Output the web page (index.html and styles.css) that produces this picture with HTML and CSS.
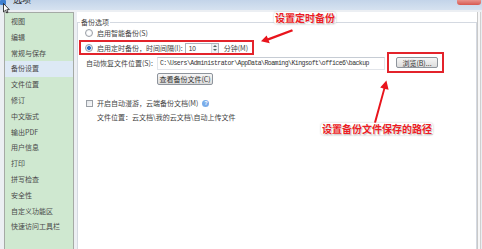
FILE: index.html
```html
<!DOCTYPE html>
<html lang="zh">
<head>
<meta charset="utf-8">
<title>选项</title>
<link rel="stylesheet" href="styles.css">
</head>
<body>
<div class="window">
  <div class="titlebar">
    <span class="app-icon"></span>
    <span class="title">选项</span>
    <span class="spacer"></span>
    <span class="close"></span>
  </div>
  <div class="main">
    <nav class="sidebar">
      <div class="item">视图</div>
      <div class="item">编辑</div>
      <div class="item">常规与保存</div>
      <div class="item active">备份设置</div>
      <div class="item">文件位置</div>
      <div class="item">修订</div>
      <div class="item">中文版式</div>
      <div class="item">输出PDF</div>
      <div class="item">用户信息</div>
      <div class="item">打印</div>
      <div class="item">拼写检查</div>
      <div class="item">安全性</div>
      <div class="item">自定义功能区</div>
      <div class="item">快速访问工具栏</div>
    </nav>
    <section class="content">
      <fieldset class="group">
        <legend class="legend">备份选项</legend>
        <div class="row radio-row first">
          <span class="radio"></span>
          <span class="label">启用智能备份(S)</span>
        </div>
        <div class="row radio-row second">
          <span class="radio checked"></span>
          <span class="label">启用定时备份，时间间隔(I):</span>
          <span class="spin">
            <span class="spin-value">10</span>
            <span class="spin-btns"><span class="up"></span><span class="down"></span></span>
          </span>
          <span class="label unit">分钟(M)</span>
        </div>
        <div class="row path-row">
          <span class="label path-label">自动恢复文件位置(S):</span>
          <span class="path-input">C:\Users\Administrator\AppData\Roaming\Kingsoft\office6\backup</span>
          <span class="btn browse">浏览(B)...</span>
        </div>
        <div class="row view-row">
          <span class="btn view">查看备份文件(C)</span>
        </div>
        <div class="row check-row">
          <span class="checkbox"></span>
          <span class="label">开启自动漫游，云端备份文档(M)</span>
          <span class="help">?</span>
        </div>
        <div class="row loc-row">
          <span class="label">文件位置：云文档\我的云文档\自动上传文件</span>
        </div>
      </fieldset>
    </section>
  </div>

  <div class="mark mark-radio"></div>
  <div class="mark mark-browse"></div>
  <div class="note note-1">设置定时备份</div>
  <div class="note note-2">设置备份文件保存的路径</div>
  <svg class="arrows" width="482" height="249" viewBox="0 0 482 249">
    <polygon points="292,29.2 293,31.2 268.6,40.6 269.8,43.2 261,41.2 266.6,35.4 267.8,38.2" fill="#e8141c"/>
    <polygon points="374,122.5 376,122.8 385.2,89 388.6,89.8 386.4,80.5 380.2,87.6 383.4,88.4" fill="#e8141c"/>
    <path d="M3.5 3.5 L3.5 12 L5.5 10.2 L6.8 13 L8 12.4 L6.8 9.7 L9.3 9.6 Z" fill="#fff" stroke="#111" stroke-width="0.8" stroke-linejoin="round"/>
  </svg>
</div>
</body>
</html>
```

FILE: styles.css
```css
* { box-sizing: border-box; }

html, body {
  margin: 0;
  padding: 0;
}

body {
  width: 482px;
  height: 249px;
  overflow: hidden;
  background: #dfe8f3;
  font-family: "Noto Sans CJK SC", "Noto Sans", sans-serif;
  color: #444;
}

.window {
  position: relative;
  width: 482px;
  height: 249px;
  display: flex;
  flex-direction: column;
}

/* title bar */
.titlebar {
  height: 10px;
  display: flex;
  align-items: flex-start;
  overflow: hidden;
  background: linear-gradient(#c3d4e9, #d6e2f0);
}

.app-icon {
  width: 6px;
  height: 5px;
  background: #3d7fd0;
  border-radius: 1px;
}

.title {
  margin-left: 7px;
  margin-top: -5px;
  font-size: 9px;
  line-height: 10px;
  color: #1a1a1a;
}

.spacer { flex: 1; }

.close {
  width: 24px;
  height: 5px;
  margin-right: 1px;
  background: linear-gradient(#e8938d, #d7584f);
  border-radius: 0 0 3px 3px;
}

/* main area */
.main {
  flex: 1;
  display: flex;
  gap: 3px;
  padding: 2px 4px 0 4px;
  background: #eceff3;
  min-height: 0;
}

.sidebar {
  width: 70px;
  background: #cfe8d0;
  border: 1px solid #a5aaa5;
  border-bottom: none;
  padding-top: 1px;
  font-size: 7px;
  color: #4a4a4a;
}

.item {
  height: 15.8px;
  line-height: 15.8px;
  padding-left: 6px;
  white-space: nowrap;
}

.item.active {
  background: #dde9f5;
}

.content {
  flex: 1;
  background: #fff;
  border-right: 1px solid #c9c9c9;
  box-shadow: 2px 0 0 #f7f7f7, 3px 0 0 #cfcfcf;
  min-width: 0;
}

/* group box */
.group {
  margin: 5px 0 0 0;
  padding: 0;
  border: 1px solid #d4d9e1;
  border-bottom: none;
  height: 240px;
  min-width: 0;
  font-size: 7px;
  color: #444;
}

.legend {
  margin-left: 2px;
  padding: 0 1px;
  font-size: 7px;
  line-height: 10px;
  color: #444;
}

.row {
  display: flex;
  align-items: center;
  white-space: nowrap;
}

.label {
  line-height: 12px;
}

.radio-row {
  height: 12px;
  padding-left: 7px;
}

.radio-row.second { margin-top: 3px; }

.radio {
  width: 8px;
  height: 8px;
  border-radius: 50%;
  border: 1px solid #9a9fa6;
  background: radial-gradient(circle, #fff 30%, #e4e7eb 100%);
  margin-right: 4px;
  flex: none;
}

.radio.checked {
  background: radial-gradient(circle, #2f6fc0 0 1.6px, #d7e6f6 2.2px, #f1f4f7 100%);
}

.spin {
  display: flex;
  align-items: stretch;
  width: 34px;
  height: 11px;
  margin-left: 2px;
  border: 1px solid #abb2bd;
  background: #fff;
}

.spin-value {
  flex: 1;
  padding-left: 3px;
  font-family: "Liberation Sans", sans-serif;
  font-size: 6.5px;
  line-height: 9px;
  color: #333;
}

.spin-btns {
  width: 7px;
  display: flex;
  flex-direction: column;
  justify-content: space-around;
  align-items: center;
  background: #eef1f5;
  border-left: 1px solid #d6dbe2;
}

.spin-btns .up {
  width: 0; height: 0;
  border-left: 2px solid transparent;
  border-right: 2px solid transparent;
  border-bottom: 2px solid #566;
}

.spin-btns .down {
  width: 0; height: 0;
  border-left: 2px solid transparent;
  border-right: 2px solid transparent;
  border-top: 2px solid #566;
}

.unit {
  margin-left: 5px;
}

.path-row {
  margin-top: 3px;
  padding-left: 8px;
  height: 13px;
  align-items: flex-start;
}

.path-label {
  width: 71px;
  line-height: 13px;
}

.path-input {
  width: 228px;
  height: 13px;
  padding-left: 2px;
  border: 1px solid #e2e5ea;
  border-top-color: #c6ccd4;
  font-family: "Liberation Mono", monospace;
  font-size: 6.5px;
  letter-spacing: -0.53px;
  line-height: 11px;
  color: #333;
  overflow: hidden;
}

.btn {
  display: flex;
  align-items: center;
  justify-content: center;
  height: 12px;
  border: 1px solid #8e949c;
  border-radius: 2px;
  background: linear-gradient(#f6f6f6, #dcdcdc);
  line-height: 10px;
  color: #333;
}

.browse {
  width: 42px;
  height: 11px;
  margin-left: 11px;
}

.view-row {
  margin-top: 3px;
  padding-left: 79px;
  height: 12px;
}

.view {
  width: 56px;
}

.check-row {
  margin-top: 12px;
  height: 12px;
  padding-left: 8px;
}

.checkbox {
  width: 7px;
  height: 7px;
  border: 1px solid #9a9fa6;
  background: linear-gradient(135deg, #e3e6ea, #fafafa);
  margin-right: 4px;
  flex: none;
}

.help {
  width: 7px;
  height: 7px;
  margin-left: 4px;
  border-radius: 50%;
  background: #79acea;
  color: #fff;
  font-family: "Liberation Sans", sans-serif;
  font-size: 5.5px;
  font-weight: bold;
  line-height: 7px;
  text-align: center;
}

.loc-row {
  margin-top: 2px;
  height: 12px;
  padding-left: 19px;
}

/* annotations overlaid on the screenshot */
.mark {
  position: absolute;
  border: 2px solid #e3232b;
}

.mark-radio {
  left: 79px;
  top: 40px;
  width: 175px;
  height: 15px;
}

.mark-browse {
  left: 387px;
  top: 52px;
  width: 57px;
  height: 21px;
}

.note {
  position: absolute;
  font-family: "Noto Sans CJK SC", sans-serif;
  font-size: 10px;
  font-weight: bold;
  line-height: 12px;
  color: #ec1c24;
  padding: 0 1px;
  background: #fff;
  border-radius: 3px;
  box-shadow: 0 0 2px rgba(120, 120, 120, 0.45);
  text-shadow: 0 0 1px #fff, 1px 1px 1px rgba(0, 0, 0, 0.25);
  white-space: nowrap;
}

.note-1 {
  left: 274px;
  top: 12px;
}

.note-2 {
  left: 321px;
  top: 123px;
}

.arrows {
  position: absolute;
  left: 0;
  top: 0;
  pointer-events: none;
}
```
